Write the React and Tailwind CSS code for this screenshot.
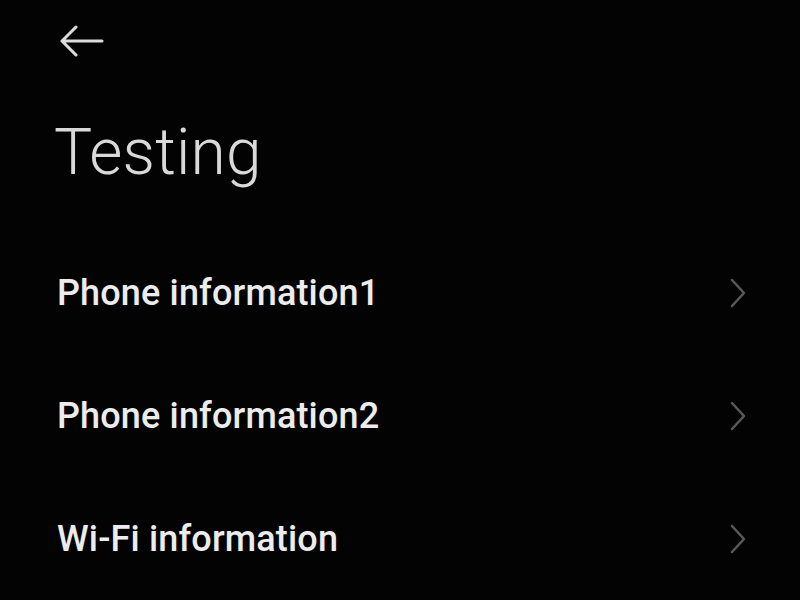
export default function App() {
  const rows = ["Phone information1", "Phone information2", "Wi-Fi information"];
  return (
    <div className="w-[800px] h-[600px] bg-[#030303] overflow-hidden flex flex-col" style={{ fontFamily: "Roboto, 'Noto Sans', sans-serif" }}>
      <div className="h-[84px] pl-[58px] flex items-center">
        <svg width="46" height="32" viewBox="0 0 46 32">
          <path d="M44 16 H4 M18 2 L4 16 L18 30" fill="none" stroke="#dcdcdc" strokeWidth="3" strokeLinecap="round" strokeLinejoin="round" />
        </svg>
      </div>
      <div className="pl-[54px] h-[150px] flex items-start">
        <h1 className="text-[64px] leading-none font-light text-[#d9d9d9] mt-[38px] tracking-[0.2px]">Testing</h1>
      </div>
      <div className="flex flex-col">
        {rows.map((r) => (
          <div key={r} className="h-[123px] pl-[57px] pr-[52px] flex items-center justify-between">
            <span className="text-[36px] font-medium text-[#ececec] tracking-[0.15px]">{r}</span>
            <svg width="20" height="32" viewBox="0 0 20 32">
              <path d="M4 3 L16 16 L4 29" fill="none" stroke="#5a5a5a" strokeWidth="2.5" strokeLinecap="round" strokeLinejoin="round" />
            </svg>
          </div>
        ))}
      </div>
    </div>
  );
}
